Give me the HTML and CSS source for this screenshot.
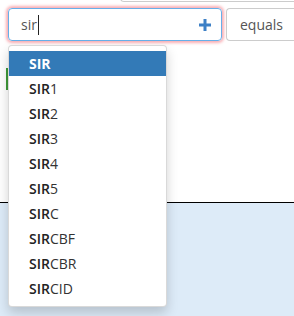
FILE: index.html
```html
<!DOCTYPE html>
<html>
<head>
<meta charset="utf-8">
<link rel="stylesheet" href="styles.css">
</head>
<body>
<div class="upper">
  <div class="stub"></div>
  <div class="row">
    <div class="search">
      <span class="typed">sir</span><span class="caret"></span>
      <svg class="plus" width="12" height="12" viewBox="0 0 12 12"><rect x="4.5" y="0" width="3" height="12" fill="#3d80c6"/><rect x="0" y="4.5" width="12" height="3" fill="#3d80c6"/></svg>
    </div>
    <div class="select">equals</div>
  </div>
  <div class="green"></div>
</div>
<div class="lower"></div>
<ul class="menu">
  <li class="active"><b>SIR</b></li>
  <li><b>SIR</b>1</li>
  <li><b>SIR</b>2</li>
  <li><b>SIR</b>3</li>
  <li><b>SIR</b>4</li>
  <li><b>SIR</b>5</li>
  <li><b>SIR</b>C</li>
  <li><b>SIR</b>CBF</li>
  <li><b>SIR</b>CBR</li>
  <li><b>SIR</b>CID</li>
</ul>
</body>
</html>
```
FILE: styles.css
```css
html, body { margin: 0; padding: 0; height: 100%; }
body {
  font-family: "Open Sans", "Liberation Sans", sans-serif;
  font-size: 14px;
  color: #333;
  display: flex;
  flex-direction: column;
  overflow: hidden;
  position: relative;
}
.upper {
  background: #fff;
  height: 202px;
  flex: none;
  position: relative;
  overflow: hidden;
}
.stub {
  margin-top: -30px;
  margin-left: 120px;
  height: 30px;
  border: 1px solid #ccc;
  border-right: none;
  border-radius: 4px 0 0 4px;
}
.row {
  display: flex;
  gap: 4px;
  padding: 6px 0 6px 8px;
}
.search {
  box-sizing: border-box;
  flex: none;
  width: 214px;
  height: 33px;
  border: 1px solid #66afe9;
  border-radius: 4px;
  box-shadow: 0 0 3px 2px rgba(245, 120, 130, 0.6);
  display: flex;
  align-items: center;
  padding: 0 10px 0 12px;
  color: #555;
}
.typed { line-height: 20px; }
.caret {
  width: 1px;
  height: 20px;
  background: #222;
  margin-left: 1px;
}
.plus { margin-left: auto; }
.select {
  box-sizing: border-box;
  flex: 1;
  min-width: 0;
  height: 33px;
  border: 1px solid #ccc;
  border-right: none;
  border-radius: 4px 0 0 4px;
  display: flex;
  align-items: center;
  padding-left: 13px;
  color: #555;
}
.green {
  position: absolute;
  left: 6px;
  top: 68px;
  width: 2px;
  height: 22px;
  background: #3f9a3a;
}
.lower {
  flex: 1;
  background: #ddebf8;
  border-top: 1px solid #000;
}
.menu {
  position: absolute;
  left: 8px;
  top: 45px;
  width: 159px;
  box-sizing: border-box;
  margin: 0;
  padding: 5px 0;
  list-style: none;
  background: #fff;
  border: 1px solid rgba(0, 0, 0, 0.15);
  border-radius: 4px;
  box-shadow: 0 6px 12px rgba(0, 0, 0, 0.175);
}
.menu li {
  height: 25px;
  line-height: 25px;
  padding: 0 20px;
  color: #333;
}
.menu li b { font-weight: 600; color: #222; }
.menu li.active {
  background: #337ab7;
  color: #fff;
}
.menu li.active b { color: #fff; font-weight: 700; }
```
